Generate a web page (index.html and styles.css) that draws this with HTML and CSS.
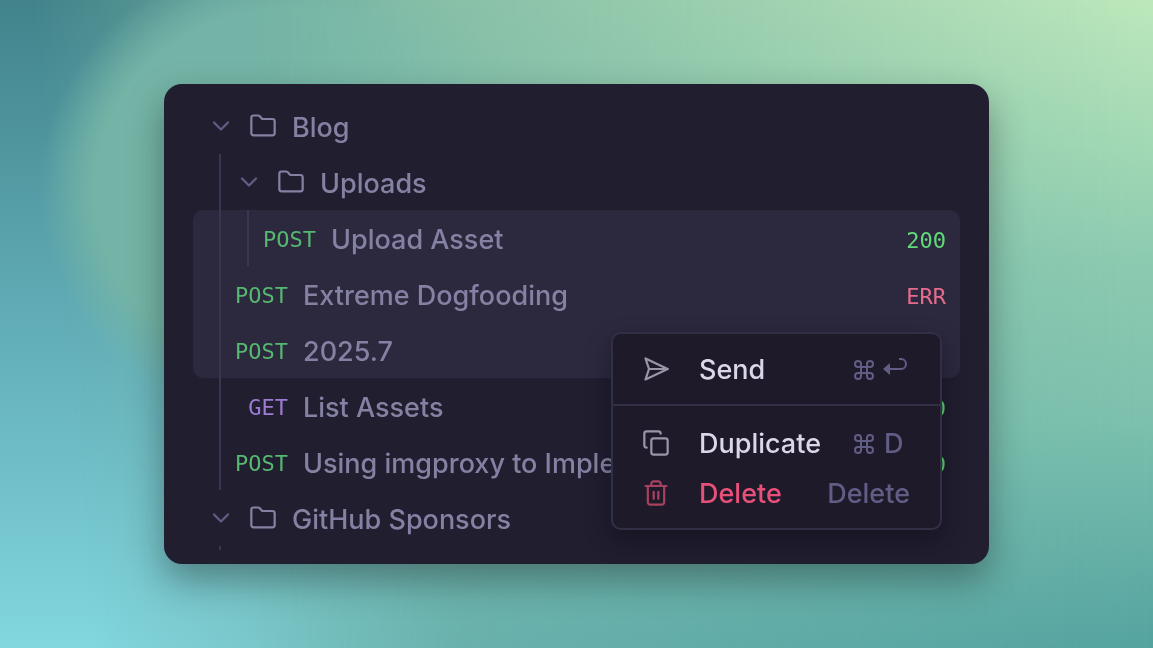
FILE: index.html
```html
<!DOCTYPE html>
<html lang="en">
<head>
    <meta charset="UTF-8">
    <meta name="viewport" content="width=device-width, initial-scale=1.0">
    <title>Requests</title>
    <link rel="stylesheet" href="styles.css">
</head>
<body>
    <svg class="symbols" aria-hidden="true">
        <symbol id="chevron" viewBox="0 0 24 24"><path d="m6 9 6 6 6-6"/></symbol>
        <symbol id="folder" viewBox="0 0 24 24"><path d="M20 20a2 2 0 0 0 2-2V8a2 2 0 0 0-2-2h-7.900a2 2 0 0 1-1.690-.9L9.600 3.900A2 2 0 0 0 7.930 3H4a2 2 0 0 0-2 2v13a2 2 0 0 0 2 2Z"/></symbol>
        <symbol id="command" viewBox="0 0 24 24"><path d="M15 6v12a3 3 0 1 0 3-3H6a3 3 0 1 0 3 3V6a3 3 0 1 0-3 3h12a3 3 0 1 0-3-3"/></symbol>
    </svg>

    <div class="backdrop">
        <div class="glow glow-middle"></div>
        <div class="glow glow-blob"></div>
        <div class="glow glow-right"></div>
    </div>

    <main class="panel">
        <div class="tree">
            <button class="row">
                <svg class="icon chevron"><use href="#chevron"/></svg>
                <svg class="icon"><use href="#folder"/></svg>
                <span class="name">Blog</span>
            </button>
            <button class="row">
                <span class="guide"></span>
                <svg class="icon chevron"><use href="#chevron"/></svg>
                <svg class="icon"><use href="#folder"/></svg>
                <span class="name">Uploads</span>
            </button>
            <div class="selection">
                <button class="row">
                    <span class="guide"></span>
                    <span class="guide"></span>
                    <span class="method post">POST</span>
                    <span class="name">Upload Asset</span>
                    <span class="status ok">200</span>
                </button>
                <button class="row">
                    <span class="guide"></span>
                    <span class="method post">POST</span>
                    <span class="name">Extreme Dogfooding</span>
                    <span class="status error">ERR</span>
                </button>
                <button class="row">
                    <span class="guide"></span>
                    <span class="method post">POST</span>
                    <span class="name">2025.7</span>
                </button>
            </div>
            <button class="row">
                <span class="guide"></span>
                <span class="method get">GET</span>
                <span class="name">List Assets</span>
                <span class="status ok">200</span>
            </button>
            <button class="row">
                <span class="guide"></span>
                <span class="method post">POST</span>
                <span class="name">Using imgproxy to Implement</span>
                <span class="status ok">200</span>
            </button>
            <button class="row">
                <svg class="icon chevron"><use href="#chevron"/></svg>
                <svg class="icon"><use href="#folder"/></svg>
                <span class="name">GitHub Sponsors</span>
            </button>
            <div class="row row-cut"><span class="guide"></span></div>
        </div>

        <div class="menu" role="menu">
            <button class="item" role="menuitem">
                <svg class="icon" viewBox="0 0 24 24"><path d="m3 3 3 9-3 9 19-9Z"/><path d="M6 12h16"/></svg>
                <span class="label">Send</span>
                <kbd class="keys">
                    <svg class="key-icon"><use href="#command"/></svg>
                    <svg class="key-icon" viewBox="0 0 24 24"><path d="M15 1h2a5 5 0 0 1 0 10H5"/><path class="solid" d="M6 5v12L-1 11Z"/></svg>
                </kbd>
            </button>
            <hr class="separator">
            <button class="item" role="menuitem">
                <svg class="icon" viewBox="0 0 24 24"><rect width="14" height="14" x="8" y="8" rx="2"/><path d="M4 16c-1.100 0-2-.9-2-2V4c0-1.100.9-2 2-2h10c1.100 0 2 .9 2 2"/></svg>
                <span class="label">Duplicate</span>
                <kbd class="keys">
                    <svg class="key-icon"><use href="#command"/></svg>
                    D
                </kbd>
            </button>
            <button class="item danger" role="menuitem">
                <svg class="icon" viewBox="0 0 24 24"><path d="M3 6h18"/><path d="M19 6v14c0 1-1 2-2 2H7c-1 0-2-1-2-2V6"/><path d="M8 6V4c0-1 1-2 2-2h4c1 0 2 1 2 2v2"/><path d="M10 11v6"/><path d="M14 11v6"/></svg>
                <span class="label">Delete</span>
                <kbd class="keys">Delete</kbd>
            </button>
        </div>
    </main>
</body>
</html>
```

FILE: styles.css
```css
* {
    box-sizing: border-box;
}
body {
    margin: 0;
    min-height: 100vh;
    padding: 84px 164px;
    font-family: Inter, "Liberation Sans", sans-serif;
    font-size: 27px;
    font-weight: 500;
    line-height: 36px;
    color: #8581a3;
}
button {
    font: inherit;
    color: inherit;
    background: none;
    border: none;
    text-align: left;
    cursor: pointer;
}
.symbols {
    position: absolute;
    width: 0;
    height: 0;
}

/* background */
.backdrop {
    position: fixed;
    inset: 0;
    z-index: -1;
    background: linear-gradient(#42838b, #5faab4 46%, #82d6de);
}
.glow {
    position: absolute;
    inset: 0;
}
.glow-middle {
    background: linear-gradient(#79b4a2, #70b5b0);
    mask-image: linear-gradient(84deg, transparent 8%, black 38%);
}
.glow-blob {
    background: radial-gradient(ellipse 230px 220px at 284px 190px, #74b4a6 82%, rgba(116, 180, 166, 0) 106%);
}
.glow-right {
    background: linear-gradient(#bde8bb, #a5dab5 20%, #8dcbb0 40%, #7cc0ad 65%, #54a3a0);
    mask-image: linear-gradient(90deg, transparent 22%, black 100%);
}

/* request tree */
.panel {
    position: relative;
    padding: 14px 29px;
    background: #201e2f;
    border-radius: 18px;
    box-shadow: 0 16px 36px rgba(20, 30, 30, 0.4);
}
.tree {
    overflow: hidden;
}
.selection {
    background: #2c293f;
    border-radius: 10px;
}
.row {
    display: flex;
    align-items: center;
    width: 100%;
    height: 56px;
    padding: 0 14px;
}
.row-cut {
    height: 4px;
}
.guide {
    flex: none;
    align-self: stretch;
    width: 16px;
    margin-left: 12px;
    border-left: 2px solid #3a3650;
}
.icon {
    flex: none;
    width: 28px;
    height: 28px;
    fill: none;
    stroke: currentColor;
    stroke-width: 1.9;
    stroke-linecap: round;
    stroke-linejoin: round;
}
.chevron {
    color: #625d84;
    margin-right: 14px;
}
.name {
    flex: 1;
    margin-left: 15px;
    padding-top: 4px;
    white-space: nowrap;
}
.method, .status {
    font-family: "DejaVu Sans Mono", monospace;
    font-size: 22px;
}
.method {
    width: 53px;
    padding-top: 4px;
    text-align: right;
}
.status {
    padding-top: 6px;
}
.post {
    color: #56b870;
}
.get {
    color: #9f7bd5;
}
.ok {
    color: #62d978;
}
.error {
    color: #e76b8c;
}

/* context menu */
.menu {
    position: absolute;
    top: 248px;
    right: 47px;
    width: 331px;
    padding: 10px 0;
    background: #1e1a2a;
    border: 2px solid #322e46;
    border-radius: 10px;
    box-shadow: 0 10px 24px rgba(10, 8, 20, 0.4);
}
.item {
    display: flex;
    align-items: center;
    width: 100%;
    height: 50px;
    padding: 0 30px 0 29px;
    color: #9a96aa;
}
.label {
    flex: 1;
    margin-left: 29px;
    padding-top: 2px;
    color: #dad7e9;
}
.danger {
    color: #a8415f;
}
.danger .label {
    color: #e75079;
}
.separator {
    height: 2px;
    margin: 10px 0 12px;
    border: none;
    background: #322e46;
}
.keys {
    display: flex;
    align-items: center;
    gap: 8px;
    min-width: 58px;
    padding-top: 2px;
    font-family: inherit;
    color: #625d84;
}
.key-icon {
    width: 24px;
    height: 24px;
    fill: none;
    stroke: currentColor;
    stroke-width: 2;
    stroke-linejoin: round;
    overflow: visible;
}
.solid {
    fill: currentColor;
    stroke: none;
}
```
